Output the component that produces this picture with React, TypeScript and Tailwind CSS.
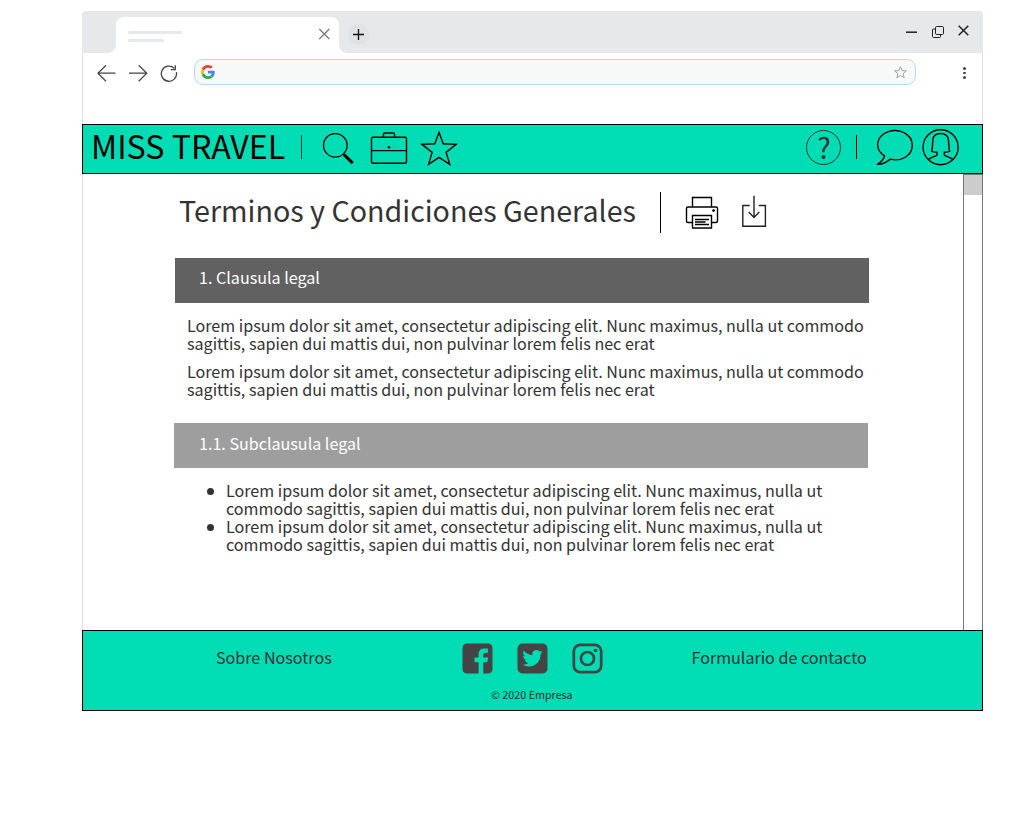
import type { ReactNode } from 'react';

function Icon({ w, h, className = '', children, sw = 1.5 }: { w: number; h: number; className?: string; children: ReactNode; sw?: number }) {
  return (
    <svg width={w} height={h} viewBox={`0 0 ${w} ${h}`} fill="none" stroke="currentColor" strokeWidth={sw} className={`block shrink-0 ${className}`}>
      {children}
    </svg>
  );
}

function TabStrip() {
  return (
    <div className="flex h-[42px] rounded-t">
      <div className="w-[34px] rounded-tl rounded-br-lg bg-[#e6e9eb]" />
      <div className="flex w-[223px] bg-[#e6e9eb] pt-1.5">
        <div className="flex flex-1 justify-between rounded-t-lg bg-white pr-[9px] pl-3">
          <div className="flex flex-col gap-[5px] pt-[14px]">
            <div className="h-[3px] w-[54px] rounded-full bg-[#e6e9eb]" />
            <div className="h-[3px] w-9 rounded-full bg-[#e6e9eb]" />
          </div>
          <Icon w={12} h={12} sw={1.2} className="mt-[11px] text-[#777]">
            <path d="M1.300 1l10 10M11.300 1L1.300 11" />
          </Icon>
        </div>
      </div>
      <div className="flex flex-1 items-start rounded-tr rounded-bl-lg bg-[#e6e9eb]">
        <div className="mt-[13px] ml-[9px] flex h-[21px] w-[21px] items-center justify-center rounded-full bg-[#e0e2e3] text-[#111]">
          <Icon w={13} h={13} sw={1.3}>
            <path d="M6.500 1v11M1 6.500h11" />
          </Icon>
        </div>
        <div className="mt-[14px] mr-[14px] ml-auto flex items-center gap-[14px] text-[#222]">
          <Icon w={12} h={13} sw={1.5}>
            <path d="M1 7.2H12" />
          </Icon>
          <Icon w={13} h={13} sw={1}>
            <rect x="4.500" y="1.500" width="8" height="8" rx="1.200" />
            <path d="M4.500 4H2.500a1 1 0 0 0-1 1v6.500a1 1 0 0 0 1 1H8.500a1 1 0 0 0 1-1V9.500" />
          </Icon>
          <Icon w={11} h={11} sw={1.5} className="-mt-[2px]">
            <path d="M.7.7l9.6 9.6M10.3.7L.7 10.3" />
          </Icon>
        </div>
      </div>
    </div>
  );
}

function GoogleMark() {
  return (
    <svg width="14" height="14" viewBox="0 0 48 48" className="block">
      <path fill="#ea4335" d="M24 9.5c3.54 0 6.71 1.22 9.21 3.6l6.85-6.85C35.9 2.38 30.47 0 24 0 14.62 0 6.51 5.38 2.56 13.22l7.98 6.19C12.43 13.72 17.74 9.5 24 9.5z" />
      <path fill="#4285f4" d="M46.98 24.55c0-1.57-.15-3.09-.38-4.55H24v9.02h12.94c-.58 2.96-2.26 5.48-4.78 7.18l7.73 6c4.51-4.18 7.09-10.36 7.09-17.65z" />
      <path fill="#fbbc05" d="M10.53 28.59A14.5 14.5 0 0 1 9.77 24c0-1.6.27-3.14.76-4.59l-7.98-6.19A23.9 23.9 0 0 0 0 24c0 3.88.92 7.54 2.56 10.78l7.97-6.19z" />
      <path fill="#34a853" d="M24 48c6.48 0 11.93-2.13 15.89-5.81l-7.73-6c-2.15 1.45-4.92 2.3-8.16 2.3-6.26 0-11.57-4.22-13.47-9.91l-7.98 6.19C6.51 42.62 14.62 48 24 48z" />
    </svg>
  );
}

function Toolbar() {
  return (
    <div className="flex h-[71px] items-start border-x border-[#dcdee0] pt-[6px] pl-[14px] text-[#444]">
      <Icon w={19} h={17} sw={1.2} className="mt-[6px]">
        <path d="M9 .2L.9 8.200l8.1 8M.9 8.200H18.500" />
      </Icon>
      <Icon w={19} h={17} sw={1.2} className="mt-[6px] ml-[13px]">
        <path d="M9.700 .2l8.1 8-8.1 8M17.800 8.200H0" />
      </Icon>
      <Icon w={18} h={18} sw={1.3} className="mt-[6px] ml-3">
        <path d="M14.2 3.200A7.6 7.6 0 1 0 16.400 7.200M15.3 .3v4.3h-4.5" />
      </Icon>
      <div className="ml-4 flex h-[26px] w-[722px] items-center justify-between rounded-[9px] border border-[#bcd6fb] bg-[#f7f9f9] pr-2 pl-1.5">
        <GoogleMark />
        <Icon w={13} h={13} sw={0.9} className="text-[#999]">
          <path d="M6.5 .7l1.6 3.9 4.3.3-3.3 2.7 1.1 4.2-3.7-2.3-3.7 2.3 1.1-4.2L.6 4.9l4.3-.3z" />
        </Icon>
      </div>
      <div className="mt-2 ml-[47px] flex flex-col gap-[2px]">
        <div className="h-[2.5px] w-[2.5px] rounded-full bg-[#444]" />
        <div className="h-[2.5px] w-[2.5px] rounded-full bg-[#444]" />
        <div className="h-[2.5px] w-[2.5px] rounded-full bg-[#444]" />
      </div>
    </div>
  );
}

function SiteHeader() {
  return (
    <header className="flex h-[50px] items-start border border-black bg-[#00dcb4] text-black">
      <span className="ml-[8px] w-[210px] text-[32.2px] leading-[40px] whitespace-nowrap">MISS TRAVEL</span>
      <div className="mt-[10px] h-6 w-px bg-black/80" />
      <Icon w={32} h={33} sw={1.3} className="mt-2 ml-5">
        <circle cx="13.300" cy="12.3" r="11.8" />
        <path d="M21.5 21.5l1 1" />
        <path d="M22 21.7l8.7 8.4" strokeWidth="3" />
      </Icon>
      <Icon w={38} h={34} sw={1.4} className="mt-[7px] ml-4">
        <rect x="1.5" y="5.3" width="35" height="26" rx="1.5" />
        <path d="M13.5 5V2.2Q13.5 1 14.7 1h8.6q1.2 0 1.2 1.2V5M1.5 18.6h35" />
        <circle cx="19" cy="15.2" r="1.200" fill="currentColor" stroke="none" />
      </Icon>
      <Icon w={38} h={36} sw={1.4} className="mt-[6px] ml-[12px]">
        <path d="M19 1.7l4.3 11.6 13.3.5-10.4 8.2 3.7 12.1L19 27.1 8.4 34.1 12 22 1.6 13.8l13.1-.5z" transform="translate(.3 -.3) scale(.985)" />
      </Icon>
      <div className="ml-auto flex items-start pr-[23px]">
        <div className="mt-[5px] flex h-[35px] w-[35px] items-start justify-center rounded-full border border-[#333] pl-px text-[28.600px] leading-[31px] text-[#333]">?</div>
        <div className="mt-[10px] ml-[15px] h-6 w-px bg-black" />
        <Icon w={38} h={38} sw={1.4} className="mt-[4px] ml-[19px]">
          <path d="M8.1 27.2C-2.6 20.5-.6 7.6 11.2 3 21.8-1 36.2 4 36.2 16.8c0 10.3-11.5 16.8-22.3 13.8-3.8 3.2-8 5.6-13.1 5.2C4.3 34 7 30.8 8.1 27.2z" transform="translate(.6 0) scale(.985)" strokeLinejoin="round" />
        </Icon>
        <Icon w={38} h={38} sw={1.4} className="mt-[3px] ml-[7px]">
          <g transform="translate(.6 .2)">
            <circle cx="19" cy="19" r="17.5" />
            <path d="M6.8 31.3q2-1.8 8.4-4.2.4-1 .1-3-3.9-.1-5.3-1.1c1.4-3 .7-7.5 1.3-11.6C11.8 7.5 14.5 5.3 19 5.3s7.200 2.200 7.800 6.100c.6 4.100-.1 8.600 1.300 11.600q-1.400 1-5.300 1.100-.3 2 .1 3 6.400 2.400 8.400 4.200" />
          </g>
        </Icon>
      </div>
    </header>
  );
}

const lorem = ['Lorem ipsum dolor sit amet, consectetur adipiscing elit. Nunc maximus, nulla ut commodo', 'sagittis, sapien dui mattis dui, non pulvinar lorem felis nec erat'];
const bullet = ['Lorem ipsum dolor sit amet, consectetur adipiscing elit. Nunc maximus, nulla ut', 'commodo sagittis, sapien dui mattis dui, non pulvinar lorem felis nec erat'];

// The joined "tt" is a discretionary ligature in this face, so it is enabled for that pair alone.
function Lines({ lines }: { lines: string[] }) {
  return (
    <div className="text-[16.1px] leading-[18px] whitespace-nowrap text-[#333]">
      {lines.map((l) => (
        <div key={l}>
          {l.split(/(tt)/).map((part, i) =>
            part === 'tt' ? (
              <span key={i} className="[font-variant-ligatures:discretionary-ligatures]">
                tt
              </span>
            ) : (
              part
            ),
          )}
        </div>
      ))}
    </div>
  );
}

function Terms() {
  return (
    <main className="flex h-[456px] border-l border-[#dcdee0]">
      <div className="flex flex-1 flex-col">
        <div className="flex h-[84px] items-start pt-[18px] pl-24">
          <h1 className="w-[481px] text-[28.65px] leading-[36px] whitespace-nowrap text-[#333]">Terminos y Condiciones Generales</h1>
          <div className="h-[41px] w-px bg-black" />
          <Icon w={34} h={34} sw={1.400} className="mt-[4px] ml-6 text-black">
            <path d="M7.500 11V1.500h19V11M7.500 26.500H3Q1.500 26.500 1.500 25V12.500Q1.500 11 3 11h28q1.500 0 1.500 1.500V25q0 1.500-1.500 1.500h-4.500M7.500 19.500h19v12.500h-19zM10 23.500h14M10 26h10.500M10 28.500h14" />
            <circle cx="28.600" cy="14.600" r="1.400" fill="currentColor" stroke="none" />
          </Icon>
          <Icon w={26} h={34} sw={1.400} className="mt-[3px] ml-[22px] text-[#222]">
            <path d="M8.700 10.500H1.800v20.800h22.600V10.500h-6.700M13 .8v21.500M7.700 17l5.300 5.400 5.300-5.400" />
          </Icon>
        </div>
        <h2 className="ml-[92px] h-[45px] w-[694px] bg-[#616161] pt-[10px] pl-6 text-[16.1px] leading-[18px] text-white">1. Clausula legal</h2>
        <div className="flex flex-col gap-[10px] pt-[13px] pl-[104px]">
          <Lines lines={lorem} />
          <Lines lines={lorem} />
        </div>
        <h3 className="mt-[25px] ml-[91px] h-[45px] w-[694px] bg-[#9e9e9e] pt-[11px] pl-[25px] text-[16.1px] leading-[18px] text-white">1.1. Subclausula legal</h3>
        <ul className="pt-[13px] pl-[123px]">
          {[0, 1].map((n) => (
            <li key={n} className="flex">
              <span className="mt-[6.500px] mr-[12.500px] ml-[.5px] h-[7px] w-[7px] rounded-full bg-[#333]" />
              <Lines lines={bullet} />
            </li>
          ))}
        </ul>
      </div>
      <div className="w-5 border-x border-t border-[#777]">
        <div className="h-5 bg-[#ccc]" />
      </div>
    </main>
  );
}

function Facebook() {
  return (
    <svg width="31" height="31" viewBox="0 0 31 31" className="block">
      <path fill="#444" d="M5.500.5h20q5 0 5 5v20q0 5-5 5h-4.200V19.200h4l.8-4.600h-4.800v-2.800q0-2 2.200-2h2.400V5.500h-3.700q-5.600 0-5.600 5.800v3.300h-4.100v4.600h4.100v11.300H5.500q-5 0-5-5v-20q0-5 5-5z" />
    </svg>
  );
}

function Twitter() {
  return (
    <svg width="31" height="31" viewBox="0 0 31 31" className="block">
      <rect x=".5" y=".5" width="30" height="30" rx="5" fill="#444" />
      <g transform="translate(5.500 5.200) scale(.84)">
        <path fill="#00dcb4" d="M23.950 4.570a10 10 0 0 1-2.820.77 4.960 4.960 0 0 0 2.160-2.720c-.95.56-2 .96-3.130 1.180a4.920 4.920 0 0 0-8.380 4.480C7.690 8.090 4.070 6.130 1.640 3.160a4.920 4.920 0 0 0 1.520 6.570 4.900 4.900 0 0 1-2.230-.61v.06a4.920 4.920 0 0 0 3.950 4.830 5 5 0 0 1-2.210.08 4.940 4.940 0 0 0 4.600 3.420A9.870 9.870 0 0 1 0 19.540a14 14 0 0 0 7.550 2.210c9.050 0 14-7.500 14-13.980v-.64a10 10 0 0 0 2.400-2.560z" />
      </g>
    </svg>
  );
}

function Instagram() {
  return (
    <svg width="31" height="31" viewBox="0 0 31 31" fill="none" stroke="#444" className="block">
      <rect x="1.800" y="1.800" width="27.400" height="27.400" rx="6.500" strokeWidth="2.700" />
      <circle cx="15.500" cy="15.500" r="6.500" strokeWidth="2.700" />
      <circle cx="23.500" cy="7.500" r="1.800" fill="#444" stroke="none" />
    </svg>
  );
}

function Footer() {
  return (
    <footer className="h-[81px] border border-black bg-[#00dcb4] text-[#333]">
      <div className="flex items-start pt-3 pl-[133px] text-[16.1px] leading-[18px]">
        <span className="mt-[5px] w-[246px]">Sobre Nosotros</span>
        <div className="flex w-[229.500px] gap-6">
          <Facebook />
          <Twitter />
          <Instagram />
        </div>
        <span className="mt-[5px] whitespace-nowrap">Formulario de contacto</span>
      </div>
      <div className="mt-[14px] pl-[408px] text-[10.75px] leading-[14px]">© 2020 Empresa</div>
    </footer>
  );
}

export default function App() {
  return (
    <div className="h-[821px] w-[1033px] overflow-hidden bg-white pt-[11px] pl-[82px] font-['Noto_Sans_CJK_SC',sans-serif]">
      <div className="w-[901px]">
        <TabStrip />
        <Toolbar />
        <SiteHeader />
        <Terms />
        <Footer />
      </div>
    </div>
  );
}
